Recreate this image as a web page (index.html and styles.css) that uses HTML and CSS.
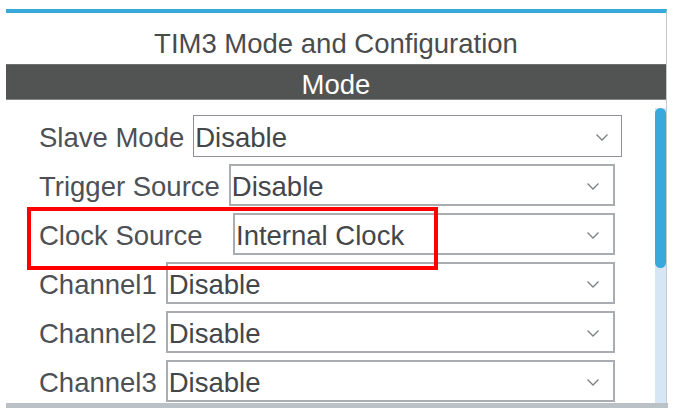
FILE: index.html
```html
<!DOCTYPE html>
<html lang="en">
<head>
  <meta charset="UTF-8" />
  <meta name="viewport" content="width=device-width, initial-scale=1" />
  <title>TIM3 Mode and Configuration</title>
  <link rel="stylesheet" href="styles.css">
</head>
<body>
  <div class="panel">
    <div class="panel-title">TIM3 Mode and Configuration</div>
    <div class="section-bar">Mode</div>

    <div class="section-body">
      <div class="fields">
        <div class="field field-slave">
          <span class="field-label">Slave Mode</span>
          <div class="dropdown dropdown-thin">
            <span>Disable</span>
            <svg class="chevron" viewBox="0 0 12 7"><path d="M0.5 0.5 L6 6 L11.5 0.5" /></svg>
          </div>
        </div>
        <div class="field">
          <span class="field-label">Trigger Source</span>
          <div class="dropdown">
            <span>Disable</span>
            <svg class="chevron" viewBox="0 0 12 7"><path d="M0.5 0.5 L6 6 L11.5 0.5" /></svg>
          </div>
        </div>
        <div class="field">
          <span class="field-label field-label-wide">Clock Source</span>
          <div class="dropdown">
            <span>Internal Clock</span>
            <svg class="chevron" viewBox="0 0 12 7"><path d="M0.5 0.5 L6 6 L11.5 0.5" /></svg>
          </div>
        </div>
        <div class="field">
          <span class="field-label">Channel1</span>
          <div class="dropdown">
            <span>Disable</span>
            <svg class="chevron" viewBox="0 0 12 7"><path d="M0.5 0.5 L6 6 L11.5 0.5" /></svg>
          </div>
        </div>
        <div class="field">
          <span class="field-label">Channel2</span>
          <div class="dropdown">
            <span>Disable</span>
            <svg class="chevron" viewBox="0 0 12 7"><path d="M0.5 0.5 L6 6 L11.5 0.5" /></svg>
          </div>
        </div>
        <div class="field">
          <span class="field-label">Channel3</span>
          <div class="dropdown">
            <span>Disable</span>
            <svg class="chevron" viewBox="0 0 12 7"><path d="M0.5 0.5 L6 6 L11.5 0.5" /></svg>
          </div>
        </div>
      </div>

      <div class="scrollbar">
        <div class="scroll-track">
          <div class="scroll-thumb"></div>
        </div>
      </div>
    </div>

    <div class="panel-foot"></div>
  </div>

  <!-- red annotation box over the clock source row -->
  <div class="highlight"></div>
</body>
</html>
```

FILE: styles.css
```css
body {
  margin: 0;
  padding: 0;
  background: #fff;
  font-family: 'Liberation Sans', Arial, sans-serif;
  font-size: 27.5px;
  color: #4d5054;
}

.panel {
  margin: 9px 0 0 6px;
  width: 660px;
  border-top: 4px solid #39a9dc;
  border-right: 1px solid #c6cacd;
}

.panel-title {
  height: 48px;
  padding-top: 3px;
  line-height: 56px;
  text-align: center;
  color: #4a4b4d;
  overflow: hidden;
}

.section-bar {
  height: 32px;
  padding-top: 2px;
  line-height: 36px;
  background: #525453;
  border-top: 1px solid #6e7070;
  border-bottom: 1px solid #858787;
  color: #fff;
  text-align: center;
  overflow: hidden;
}

.section-body {
  display: flex;
  height: 303px;
}

.fields {
  flex: 1;
  display: flex;
  flex-direction: column;
  gap: 7px;
  padding: 15px 40px 0 33px;
  overflow: hidden;
}

.field {
  display: flex;
  align-items: center;
}

.field-slave {
  margin-right: -7px;
}

.field-label {
  margin-right: 9px;
  white-space: nowrap;
  padding-top: 4px;
}

.field-label-wide {
  width: 185px;
}

.dropdown {
  flex: 1;
  height: 42px;
  box-sizing: border-box;
  display: flex;
  align-items: center;
  justify-content: space-between;
  padding: 4px 14px 0 1px;
  border: 2px solid #a9adb1;
  color: #44464a;
  background: #fff;
}

.dropdown-thin {
  border: 1px solid #8f9398;
  padding-left: 1px;
  padding-right: 13px;
}

.chevron {
  width: 12px;
  height: 7px;
  margin-top: -1px;
  fill: none;
  stroke: #7c7f83;
  stroke-width: 1.3;
}

.scrollbar {
  width: 11px;
  padding-top: 8px;
  display: flex;
}

.scroll-track {
  flex: 1;
  background: #d6e6f4;
}

.scroll-thumb {
  height: 160px;
  background: #39a9dc;
  border-radius: 6px;
}

.panel-foot {
  height: 5px;
  background: #bac2c8;
  margin-right: -2px;
}

.highlight {
  position: absolute;
  left: 27px;
  top: 207px;
  width: 411px;
  height: 63px;
  box-sizing: border-box;
  border: 4px solid #ff0000;
}
```
